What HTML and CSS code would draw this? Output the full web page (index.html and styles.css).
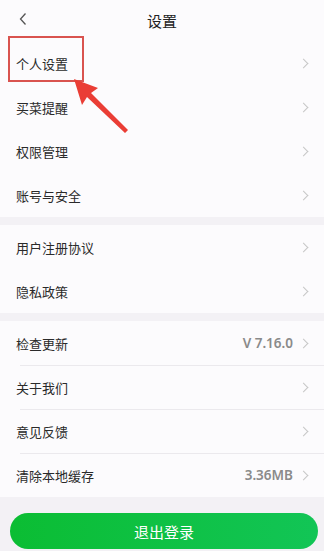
FILE: index.html
```html
<!DOCTYPE html>
<html lang="zh-CN">
<head>
    <meta charset="UTF-8" />
    <meta name="viewport" content="width=device-width, initial-scale=1.0"/>
    <title>设置</title>
    <link rel="stylesheet" href="styles.css">
</head>
<body>
    <div class="page">
        <div class="header">
            <svg class="back" width="10" height="14" viewBox="0 0 10 14">
                <path d="M7.5 1.5 L2.5 7 L7.5 12.5" fill="none" stroke="#555" stroke-width="1.3"/>
            </svg>
            <h1>设置</h1>
        </div>

        <div class="group">
            <div class="row"><span class="label">个人设置</span><span class="right"><i class="chev"></i></span></div>
            <div class="row"><span class="label">买菜提醒</span><span class="right"><i class="chev"></i></span></div>
            <div class="row"><span class="label">权限管理</span><span class="right"><i class="chev"></i></span></div>
            <div class="row"><span class="label">账号与安全</span><span class="right"><i class="chev"></i></span></div>
        </div>

        <div class="group">
            <div class="row"><span class="label">用户注册协议</span><span class="right"><i class="chev"></i></span></div>
            <div class="row"><span class="label">隐私政策</span><span class="right"><i class="chev"></i></span></div>
        </div>

        <div class="group lined">
            <div class="row"><span class="label">检查更新</span><span class="right"><span class="value">V 7.16.0</span><i class="chev"></i></span></div>
            <div class="row"><span class="label">关于我们</span><span class="right"><i class="chev"></i></span></div>
            <div class="row"><span class="label">意见反馈</span><span class="right"><i class="chev"></i></span></div>
            <div class="row"><span class="label">清除本地缓存</span><span class="right"><span class="value">3.36MB</span><i class="chev"></i></span></div>
        </div>

        <div class="footer">
            <button class="logout">退出登录</button>
        </div>

        <!-- annotation overlay -->
        <div class="mark-box"></div>
        <svg class="mark-arrow" width="70" height="70" viewBox="0 0 70 70">
            <polygon points="1,1 25,10 18,15 55,52 52,55 14,19 9,27" fill="#ea3d35"/>
        </svg>
    </div>
</body>
</html>
```

FILE: styles.css
```css
* {
    margin: 0;
    padding: 0;
    box-sizing: border-box;
}

body {
    font-family: "Noto Sans CJK SC", "Noto Sans", sans-serif;
    background: #f3f1f5;
    width: 324px;
    height: 551px;
    overflow: hidden;
}

.page {
    position: relative;
    height: 100%;
}

.header {
    height: 41px;
    background: #fcfbfd;
    display: flex;
    align-items: center;
    justify-content: center;
    position: relative;
}

.header h1 {
    font-size: 15px;
    font-weight: 400;
    color: #222;
}

.back {
    position: absolute;
    left: 18px;
    top: 12px;
}

.group {
    background: #fcfbfd;
    margin-bottom: 8px;
}

.row {
    height: 44px;
    display: flex;
    align-items: center;
    justify-content: space-between;
    padding: 0 14px 0 16px;
}

.label {
    font-size: 13px;
    color: #2a2a2a;
}

.right {
    display: flex;
    align-items: center;
    gap: 7px;
}

.value {
    font-family: "Noto Sans", "Open Sans", sans-serif;
    font-size: 13.5px;
    font-weight: 600;
    color: #8a8a8a;
}

.chev {
    width: 7px;
    height: 7px;
    border-top: 1.2px solid #c6c6c6;
    border-right: 1.2px solid #c6c6c6;
    transform: rotate(45deg);
    margin-right: 3px;
}

.lined {
    margin-bottom: 0;
}

.lined .row + .row {
    background-image: linear-gradient(#ebe9ed, #ebe9ed);
    background-size: calc(100% - 20px) 1px;
    background-position: 20px 0;
    background-repeat: no-repeat;
}

.footer {
    padding: 16px 6px 0 10px;
}

.logout {
    width: 100%;
    height: 36px;
    border: none;
    border-radius: 18px;
    background: linear-gradient(90deg, #0bbd33 0%, #12c556 100%);
    color: #fff;
    font-family: "Noto Sans CJK SC", sans-serif;
    font-size: 15px;
}

.mark-box {
    position: absolute;
    left: 8px;
    top: 36px;
    width: 76px;
    height: 46px;
    border: 2px solid #d9534f;
}

.mark-arrow {
    position: absolute;
    left: 73px;
    top: 78px;
}
```
